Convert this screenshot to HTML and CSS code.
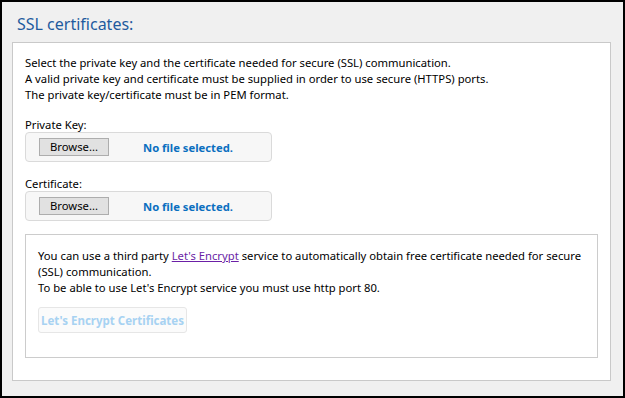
FILE: index.html
```html
<!DOCTYPE html>
<html>
<head>
<meta charset="utf-8">
<link rel="stylesheet" href="styles.css">
</head>
<body>
<div class="frame">
  <h1 class="title">SSL certificates:</h1>
  <div class="panel">
    <p class="intro">Select the private key and the certificate needed for secure (SSL) communication.<br>A valid private key and certificate must be supplied in order to use secure (HTTPS) ports.<br>The private key/certificate must be in PEM format.</p>
    <div class="field-group">
      <div class="label">Private Key:</div>
      <div class="file-box">
        <span class="browse">Browse...</span>
        <span class="nofile">No file selected.</span>
      </div>
    </div>
    <div class="field-group">
      <div class="label">Certificate:</div>
      <div class="file-box">
        <span class="browse">Browse...</span>
        <span class="nofile">No file selected.</span>
      </div>
    </div>
    <div class="le-box">
      <p class="le-text">You can use a third party <a class="link" href="#">Let's Encrypt</a> service to automatically obtain free certificate needed for secure (SSL) communication.<br>To be able to use Let's Encrypt service you must use http port 80.</p>
      <span class="le-btn">Let's Encrypt Certificates</span>
    </div>
  </div>
</div>
</body>
</html>
```
FILE: styles.css
```css
html, body {
  margin: 0;
  padding: 0;
}
body {
  font-family: "Noto Sans", "Open Sans", sans-serif;
  font-size: 11.25px;
  color: #000;
}
.frame {
  width: 625px;
  height: 398px;
  box-sizing: border-box;
  border: 2px solid #000;
  background: #f0f0f0;
  display: flex;
  flex-direction: column;
  padding: 0 12px 15px 10px;
}
.title {
  margin: 0;
  padding: 12px 0 0 5px;
  height: 40px;
  flex: none;
  box-sizing: border-box;
  font-size: 16px;
  font-weight: normal;
  line-height: 20px;
  color: #1f5b9e;
}
.panel {
  flex: 1;
  background: #fff;
  border: 1px solid #c9c9c9;
  padding: 12px 12px 0 12px;
}
.intro {
  margin: 0;
  line-height: 16px;
}
.field-group {
  margin-top: 14px;
}
.label {
  line-height: 15px;
}
.file-box {
  width: 247px;
  height: 30px;
  box-sizing: border-box;
  border: 1px solid #dadada;
  border-radius: 4px;
  background: #f7f7f7;
  display: flex;
  align-items: center;
  padding-left: 13px;
  gap: 34px;
}
.browse {
  width: 70px;
  height: 18px;
  box-sizing: border-box;
  border: 1px solid #adadad;
  background: #e1e1e1;
  display: flex;
  align-items: center;
  justify-content: center;
  line-height: 16px;
}
.nofile {
  font-weight: bold;
  color: #0b6fc0;
}
.le-box {
  margin-top: 13px;
  border: 1px solid #cccccc;
  padding: 13px 12px 24px 12px;
}
.le-text {
  margin: 0;
  line-height: 16px;
}
.link {
  color: #6b1fa6;
  text-decoration: underline;
}
.le-btn {
  margin-top: 11px;
  width: 149px;
  height: 26px;
  box-sizing: border-box;
  border: 1px solid #e6e6e6;
  border-radius: 3px;
  background: #fbfbfb;
  color: #a7d2f2;
  font-weight: bold;
  font-size: 11.5px;
  white-space: nowrap;
  display: flex;
  align-items: center;
  justify-content: center;
}
```
